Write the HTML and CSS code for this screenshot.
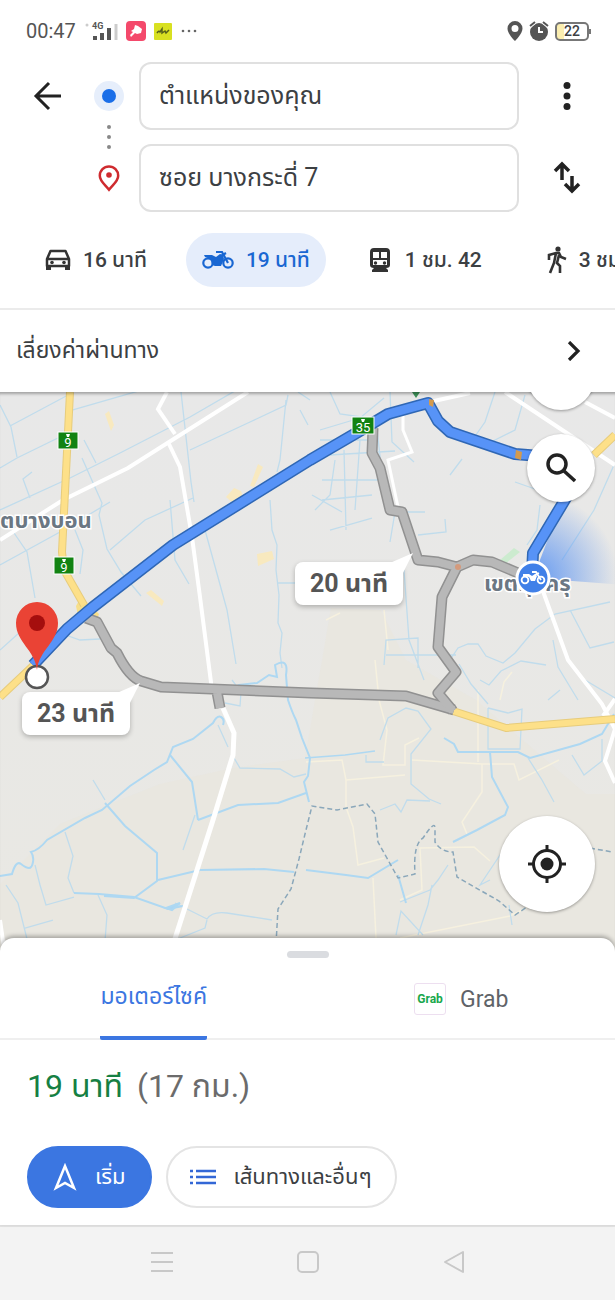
FILE: index.html
```html
<!DOCTYPE html>
<html lang="th">
  <head>
    <meta charset="UTF-8" />
    <meta name="viewport" content="width=device-width, initial-scale=1" />
    <title>Directions</title>
    <link rel="stylesheet" href="styles.css">
  </head>
  <body>
    <div class="app">
      <div class="status-bar">
        <div class="status-group">
          <span class="clock">00:47</span>
          <svg class="signal" width="34" height="22" viewBox="0 0 34 22">
            <circle cx="3" cy="5" r="1.5" fill="#ccc" />
            <path d="M11 16v4M18 13v7M25 8v12" stroke="#555" stroke-width="4" />
            <path d="M32 4v16" stroke="#ccc" stroke-width="3" />
            <text x="8" y="9" class="signal-text">4G</text>
          </svg>
          <svg width="20" height="20" viewBox="0 0 20 20">
            <rect width="20" height="20" rx="4" fill="#f4496b" />
            <path d="M9 4l3 1 4 3-1 4-4 1-2-1-4 4-1-2 3-3-2-1 3-2z" fill="#fff" />
          </svg>
          <svg width="18" height="17" viewBox="0 0 18 17">
            <rect width="18" height="17" rx="1" fill="#d8e021" />
            <path d="M3 10q2-3 3-1l2-3v4l3-2 1 2 3-3" fill="none" stroke="#55601a" stroke-width="1.5" />
          </svg>
          <svg width="18" height="4" viewBox="0 0 18 4" fill="#666">
            <circle cx="3" cy="2" r="1.3" />
            <circle cx="9" cy="2" r="1.3" />
            <circle cx="15" cy="2" r="1.3" />
          </svg>
        </div>
        <div class="status-group right">
          <svg width="16" height="20" viewBox="0 0 16 20">
            <path d="M8 0a7.5 7.5 0 0 0-7.5 7.5C.5 13 8 20 8 20s7.5-7 7.5-12.5A7.5 7.5 0 0 0 8 0zm0 4a3.5 3.5 0 1 1 0 7 3.5 3.5 0 0 1 0-7z" fill="#555" />
          </svg>
          <svg width="20" height="20" viewBox="0 0 20 20">
            <circle cx="10" cy="11" r="9" fill="#555" />
            <path d="M1 5l5-4M19 5l-5-4" stroke="#fff" stroke-width="4" />
            <path d="M1 5l5-4M19 5l-5-4" stroke="#555" stroke-width="2" />
            <path d="M10 6v5h4" fill="none" stroke="#fff" stroke-width="2" />
          </svg>
          <span class="battery">22</span>
        </div>
      </div>

      <form class="search">
        <button type="button" class="icon-button" aria-label="Back">
          <svg width="30" height="30" viewBox="0 0 30 30" fill="none" stroke="#222" stroke-width="3">
            <path d="M29 15H4M17 2L4 15l13 13" />
          </svg>
        </button>
        <div class="stops">
          <svg width="30" height="134" viewBox="0 0 30 134">
            <circle cx="15" cy="25" r="15" fill="#e6eefb" />
            <circle cx="15" cy="25" r="7" fill="#1a6ee8" />
            <g fill="#888">
              <circle cx="15" cy="56" r="2" />
              <circle cx="15" cy="66" r="2" />
              <circle cx="15" cy="76" r="2" />
            </g>
            <path d="M15 95.5a9.2 9.2 0 0 0-9.2 9.3c0 5.500 5 8.500 9.200 14 4.200-5.500 9.200-8.500 9.200-14a9.200 9.200 0 0 0-9.200-9.300z" fill="none" stroke="#cf2b2f" stroke-width="2.500" />
            <circle cx="15" cy="104" r="2.800" fill="#cf2b2f" />
          </svg>
        </div>
        <div class="fields">
          <input type="text" aria-label="Start" value="ตำแหน่งของคุณ" />
          <input type="text" aria-label="Destination" value="ซอย บางกระดี่ 7" />
        </div>
        <div class="actions">
          <button type="button" class="icon-button" aria-label="More">
            <svg width="8" height="30" viewBox="0 0 8 30" fill="#222">
              <circle cx="4" cy="4.500" r="3.500" />
              <circle cx="4" cy="15" r="3.500" />
              <circle cx="4" cy="25.500" r="3.500" />
            </svg>
          </button>
          <button type="button" class="icon-button" aria-label="Swap">
            <svg width="28" height="34" viewBox="0 0 28 34" fill="none" stroke="#222" stroke-width="3.500">
              <path d="M9 19V2M2 10l7-7 7 7M19 15v16M12 23l7 7 7-7" />
            </svg>
          </button>
        </div>
      </form>

      <nav class="modes">
        <button class="mode">
          <svg width="26" height="22" viewBox="0 0 26 22">
            <path d="M5.500 2h15L24 10v7H2v-7zM3 10h20" fill="none" stroke="#333" stroke-width="2.500" stroke-linejoin="round" />
            <path d="M1 16h5v5H1zM20 16h5v5h-5z" fill="#333" />
            <circle cx="7" cy="13.500" r="1.800" fill="#333" />
            <circle cx="19" cy="13.500" r="1.800" fill="#333" />
          </svg>
          16 นาที
        </button>
        <button class="mode active">
          <svg width="32" height="20" viewBox="0 0 32 20">
            <g fill="none" stroke="#1967d2" stroke-width="2.200">
              <circle cx="6" cy="13" r="4.700" />
              <circle cx="26" cy="13" r="4.700" />
              <path d="M14 2h6l6 11M19 6l5-3" />
            </g>
            <path d="M2 5h8l4 2 4-3 3 1 1 4-3 7h-6l-3-1-1-6-6-2z" fill="#1967d2" />
          </svg>
          19 นาที
        </button>
        <button class="mode">
          <svg width="28" height="26" viewBox="-4 0 28 26">
            <path d="M5 1h12q4 0 4 4v13q0 3-4 3l2 2v2H3v-2l2-2q-4 0-4-3V5q0-4 4-4z" fill="#333" />
            <path d="M4 5h6v6H4zM12 5h6v6h-6zM4 13h14v5H4z" fill="#fff" />
            <circle cx="6.500" cy="16" r="1.700" fill="#333" />
            <circle cx="15.500" cy="16" r="1.700" fill="#333" />
          </svg>
          1 ชม. 42
        </button>
        <button class="mode">
          <svg width="20" height="28" viewBox="0 0 20 28">
            <circle cx="11" cy="3" r="2.600" fill="#333" />
            <path d="M2 14V9l7-2h3l2 4 5 2M9 7L7 17l-4 10M12 9l-2 8 3 3v7" fill="none" stroke="#333" stroke-width="2.600" />
          </svg>
          3 ชม.
        </button>
      </nav>

      <button class="avoid">
        เลี่ยงค่าผ่านทาง
        <svg width="14" height="20" viewBox="0 0 14 20" fill="none" stroke="#222" stroke-width="3.200">
          <path d="M2 1l9 9-9 9" />
        </svg>
      </button>

      <main class="map">
        <svg class="map-canvas" viewBox="0 392 615 558" preserveAspectRatio="xMidYMin slice">
          <defs>
            <linearGradient id="land" x1="0" y1="0" x2="0" y2="1">
              <stop offset="0" stop-color="#e8e8e8" />
              <stop offset="1" stop-color="#e9e8e3" />
            </linearGradient>
            <radialGradient id="beam" gradientUnits="userSpaceOnUse" cx="533" cy="578" r="85">
              <stop offset="0" stop-color="#4285f4" stop-opacity="0.8" />
              <stop offset="1" stop-color="#4285f4" stop-opacity="0" />
            </radialGradient>
          </defs>
          <rect y="392" width="615" height="558" fill="url(#land)" />
          <path d="M233 768l72-10 26-150 50 2 25 50 70 40 70 60 40 34 29 0v156H0v-66l60-60 100-40z" fill="#e8e6df" opacity="0.8" />

          <!-- parks and built up blocks -->
          <g fill="#f8e9bf">
            <path d="M105 414l4-3 5 14-3 6zM226 497l8-9 7 3 3 9-10 4zM250 486l8-22 5 3-9 20zM257 554l15-3 2 8-16 7zM146 593l5-3 13 11-2 5z" />
            <path d="M76 606l5-9 18 17-4 10-17-8z" fill="#f7df8b" />
          </g>
          <path d="M500 560l14-12 6 4-15 12z" fill="#ccebcf" />

          <!-- small lanes -->
          <g fill="none" stroke="#f6f1df" stroke-width="1.500">
            <path d="M375 660l4 40 8 30-4 35 22 0 0-20 14-7M306 762l36-2 4 20v27M346 780l59-5M346 807l7 20 5 38 26-7M412 760l70 4 0 28-20 30 5 12M482 764l32 0 5 16 40-20M478 690v72M373 878l3 60M400 900l22-10-2-42 54-1 16 14M400 938l60-12 50-10 40-20M384 610l4 40M326 620l14-7" />
            <path d="M500 700l4-18 8-10" />
          </g>

          <!-- canals and rivers -->
          <g fill="none" stroke="#c0dcec" stroke-width="1.300">
            <path d="M0 405l11 22 6 30M10 426l60-32M0 468l17-10 45-22M0 510l70-32 50-25 70-36 100-58M0 565l60-33 50-30M72 410l70-20M84 440l12 23M30 498L23 479l9-7M82 458l20 45-3 12 8 34 14 23 20 24M12 530l15 22 8 46M75 530l8 20-3 24M110 550l35-30 48-22M170 500l5 60 14 24M181 392l10 90 3 20M190 450l60-28 36-17 2-10M286 400l-6 60-3 12M205 530l22 80 9 54" />
            <path d="M270 500l2 30 5 15-1 25 3 25-1 28 4 10-2 20 2 15M278 583h20M310 400l-12-8M300 410l8 15M0 650l20-18M60 633l20 7 20-1" />
            <path d="M320 430l40-12 24-20M330 392l10 22 35 5 50-20M390 392l2 50 22 20M330 455l65-4M335 460l-5 35-15 15M344 450l2 80M360 440l-5 70M322 480h64M322 500l50-5M312 495l30 17M330 530l42-12M395 512l-5 30M395 512h30M418 535l28-3-1-13M320 440h50M376 420l5 45M450 475l12-16M495 392l-10 30-14 20M525 395l-10 35-24 12M540 505l-3 25-10 15" />
            <path d="M614 465l-20 45-32 50M515 482l20 7M404 570l5 70 15 40M450 660l8-12 10-4 10 0 8 12 17 7 12-10 20-24 20-15 55-12M570 610l20 38 24-6M384 665l2-25 32-2v30M386 655h70M488 708l20 5 14-4-2 40-32 0V708" />
            <path d="M459 664l12 20 17 20M480 680l9 5 12-14 20-10 25 4M553 640l5 27 20 33M560 690l-12 10M585 680l30 18" />
            <path d="M380 740l8-22 18-10 12 3 13 18-20 25 0 30 18 15 12 5M366 755l0 7h18M380 810l15-6 6 8 6-12 23 1M572 755l12 20 18-14 0-22M528 758l14 22 12 22M490 880l-10 5 20-30M512 925l-3-20M448 865l-10 15-8 10-30 12M418 935l10-30 4-20M396 935l5-24 22 24" />
            <path d="M93 780l12 20M65 832l8 24-5 22 6 15M35 865l5 20 6 20 28-8M6 885l12 18 10 40M25 928l28-8M98 895l9 20-2 26M195 815l-12 35M207 920l-2 8-30 12M232 680l9 12-1 14-15-3M218 725l10 22M234 758l6 10 40 1 14 8 12-3M175 903l32 16q5-8 20-6l45 7" />
          </g>
          <g fill="none" stroke="#aed8f2" stroke-width="2">
            <path d="M0 876l12-2q4-14 9-10t8 4 4-6-2-10q8-2 16-12l38-22 17-8 28-24 24-16 13-8 6-15 20-8 20-16q4-8 8-6t2 8" />
            <path d="M105 803l20 23 32 27v28l-23 17-30-2M170 755l22 27 6 38M158 880l42-10 64-1 30 3M74 893l25 1 35 3 34 12 15-3" />
            <path d="M198 820l40-15 40-2 28-10M225 692l14-7 18-2 12-8 8 2-2-12q14-8 11 10l2 25q4 12 8 20l6 18 8 20-2 18-4 6 5 20" />
            <path d="M306 870l40 5 22 3 30-18M398 875l8 28" />
            <path d="M444 738l10 6 4 8 32 0 28 0 12 6 50-14 22-10 12-20M490 752l2 25 16 30-3 8-28 15-24 12" />
            <path d="M305 758l40-3 30-4" stroke-width="1.500" />
            <path d="M180 903l-14 5 6 2z" fill="#a9d6f5" />
          </g>

          <!-- district border -->
          <path d="M276 944l2-35 13-20 8-30 6-25 7-28 25 4 30-6 8 10 3 28 20 36 17-4q-2-30 8-36 12-18 12-10l0 14q6 10 18 10l4 25 42 24 16 14 12-8M590 848l22 4" fill="none" stroke="#8aa7ba" stroke-width="1.500" stroke-dasharray="5 3" />

          <!-- minor roads -->
          <g fill="none" stroke="#fff" stroke-width="4">
            <path d="M0 540l63-40 65-32 120-76" />
            <path d="M167 392l-9 17 17 25M168 442l12 25 12 70 8 60 12 93" />
            <path d="M223 708l11 25-1 22-20 65-40 125" stroke-width="5" />
            <path d="M403 410l0 20 9 22-24 8 10 47" stroke-width="3" />
            <path d="M505 392l110 73M425 403l45-10M585 402l30 16" />
            <path d="M540 583l28 77 34 44 13 25-10 32 10 22M603 716l12-17" />
          </g>
          <path d="M0 920l4 28" stroke="#fff" stroke-width="4" />

          <!-- highways -->
          <g fill="none" stroke-linejoin="round">
            <g stroke="#e7cc7c" stroke-width="8">
              <path d="M70 392l-8 160 2 18 20 35M0 697l35-33M453 711l53 17 109-9M594 455l21-20" />
            </g>
            <g stroke="#fde089" stroke-width="6">
              <path d="M70 392l-8 160 2 18 20 35M0 697l35-33M453 711l53 17 109-9M594 455l21-20" />
            </g>
          </g>

          <!-- other routes -->
          <g fill="none" stroke-linejoin="round">
            <g stroke="#919191" stroke-width="11">
              <path d="M217 692l3 16M86 618l11 4 14 26 6 5q12 24 24 28l20 6 150 6 95 3 48 14" />
              <path d="M373 428l-1 25 8 15 10 42 12 2 16 48 20 2 19 5 16-7 19 2 26 11M457 567l-15 30-4 50 18 25-18 21 15 18" />
            </g>
            <g stroke="#b8b8b8" stroke-width="8">
              <path d="M217 692l3 16M86 618l11 4 14 26 6 5q12 24 24 28l20 6 150 6 95 3 48 14" />
              <path d="M373 428l-1 25 8 15 10 42 12 2 16 48 20 2 19 5 16-7 19 2 26 11M457 567l-15 30-4 50 18 25-18 21 15 18" />
            </g>
          </g>
          <circle cx="458" cy="567" r="3" fill="#d49a7c" />
          <path d="M412 392h8l-4 6z" fill="#3c9158" />

          <path d="M533 578L565 495l60 15v75z" fill="url(#beam)" />

          <text x="484" y="591" class="place">เขตทุ่งครุ</text>
          <text x="0" y="528" class="place">ตบางบอน</text>

          <!-- selected route -->
          <g fill="none" stroke-linejoin="round">
            <path d="M33 665l34-36 26-22 80-62 137-85 48-28 30-18 40-11 10 18 12 11 65 22 50 4 20 8-22 37-30 50-1 20" stroke="#2f67b5" stroke-width="12" />
            <path d="M33 665l34-36 26-22 80-62 137-85 48-28 30-18 40-11 10 18 12 11 65 22 50 4 20 8-22 37-30 50-1 20" stroke="#5793f7" stroke-width="9" />
          </g>
          <path d="M429 399l5 1-1 7-4-2zM516 450l6 2-1 8-6-2z" fill="#d39a4e" />

          <!-- road shields -->
          <g class="shield">
            <rect x="58" y="432" width="20" height="17" />
            <rect x="54" y="557" width="20" height="17" />
            <rect x="352" y="417" width="22" height="17" />
            <path d="M66 434h4l-1 3h-2zM62 559h4l-1 3h-2zM361 419h4l-1 3h-2z" class="crown" />
            <text x="68" y="447">9</text>
            <text x="64" y="572">9</text>
            <text x="363" y="432">35</text>
          </g>

          <!-- destination -->
          <circle cx="37" cy="677" r="11" fill="#fff" stroke="#555" stroke-width="2.500" />
          <path d="M37 670c-2-20-21-28-21-47a21 21 0 0 1 42 0c0 19-19 27-21 47z" fill="#ea4335" />
          <circle cx="37" cy="623" r="8" fill="#a50e0e" />

          <!-- current position -->
          <circle cx="533" cy="578" r="16" fill="#4080e8" stroke="#fff" stroke-width="3" />
          <g fill="none" stroke="#fff" stroke-width="1.800">
            <circle cx="525" cy="580" r="3.400" />
            <circle cx="541" cy="580" r="3.400" />
            <path d="M532 572h4l5 8M535 575l4-2" />
            <path d="M523 574h6l3 2 3-2 2 2-2 5h-4l-2-4-6-1z" fill="#fff" stroke="none" />
          </g>
        </svg>

        <span class="callout callout-north">20 นาที</span>
        <span class="callout callout-south">23 นาที</span>

        <button class="fab layers" aria-label="Layers"></button>
        <button class="fab find" aria-label="Search">
          <svg width="30" height="30" viewBox="0 0 30 30" fill="none" stroke="#222" stroke-width="3.500">
            <circle cx="11" cy="11" r="9" />
            <path d="M18 18l11 10" />
          </svg>
        </button>
        <button class="fab locate" aria-label="My location">
          <svg width="38" height="38" viewBox="0 0 38 38" fill="none" stroke="#222" stroke-width="3">
            <circle cx="19" cy="19" r="13.500" />
            <path d="M19 0v6M19 32v6M0 19h6M32 19h6" />
            <circle cx="19" cy="19" r="6.500" fill="#222" stroke="none" />
          </svg>
        </button>
      </main>

      <section class="sheet">
        <div class="handle"></div>
        <div class="tabs">
          <button class="tab active"><span>มอเตอร์ไซค์</span></button>
          <button class="tab">
            <span class="grab-logo">Grab</span>
            Grab
          </button>
        </div>
        <p class="summary"><span class="duration">19 นาที</span> (17 กม.)</p>
        <div class="buttons">
          <button class="pill start">
            <svg width="24" height="28" viewBox="0 0 24 28" fill="none" stroke="#fff" stroke-width="2.500">
              <path d="M12 3L3 25l9-5 9 5z" />
            </svg>
            เริ่ม
          </button>
          <button class="pill">
            <svg width="26" height="16" viewBox="0 0 26 16" stroke="#3367d6" stroke-width="2.500">
              <path d="M0 2h3M6 2h20M0 8h3M6 8h20M0 14h3M6 14h20" />
            </svg>
            เส้นทางและอื่นๆ
          </button>
        </div>
      </section>

      <footer class="nav-bar">
        <button aria-label="Recent apps">
          <svg width="22" height="22" viewBox="0 0 22 22" stroke="#c8c8c8" stroke-width="2">
            <path d="M0 2h22M0 11h22M0 20h22" />
          </svg>
        </button>
        <button aria-label="Home">
          <svg width="22" height="22" viewBox="0 0 22 22" fill="none" stroke="#c8c8c8" stroke-width="2">
            <rect x="1" y="1" width="20" height="20" rx="4" />
          </svg>
        </button>
        <button aria-label="Back">
          <svg width="22" height="24" viewBox="0 0 22 24" fill="none" stroke="#c8c8c8" stroke-width="2" stroke-linejoin="round">
            <path d="M20 2v20L2 12z" />
          </svg>
        </button>
      </footer>
    </div>
  </body>
</html>
```
FILE: styles.css
```css
* {
  box-sizing: border-box;
}

body {
  margin: 0;
  font-family: Roboto, "Noto Sans Thai", "Noto Sans", sans-serif;
  color: #3c4043;
  background: #fff;
}

button,
input {
  font-family: inherit;
  color: inherit;
}

button {
  padding: 0;
  border: none;
  background: none;
}

svg {
  flex-shrink: 0;
}

.app {
  display: flex;
  flex-direction: column;
  min-height: 100vh;
  overflow: hidden;
}

/* status bar */
.status-bar {
  display: flex;
  justify-content: space-between;
  height: 62px;
  padding: 0 26px;
}

.status-group {
  display: flex;
  align-items: center;
  gap: 8px;
}

.status-group.right {
  gap: 6px;
}

.clock {
  font-size: 20px;
  color: #555;
}

.signal-text {
  font-size: 9px;
  font-weight: bold;
  fill: #555;
}

.battery {
  position: relative;
  width: 34px;
  border: 2px solid #777;
  border-radius: 5px;
  background: linear-gradient(to right, #fbeeb0 22%, #fff 22%);
  font-size: 14px;
  font-weight: 500;
  line-height: 15px;
  text-align: center;
}

.battery::after {
  content: "";
  position: absolute;
  top: 5px;
  right: -4px;
  width: 2px;
  height: 5px;
  background: #777;
}

/* start and destination */
.search {
  display: flex;
  height: 150px;
}

.icon-button {
  display: flex;
  align-items: center;
  justify-content: center;
  height: 68px;
}

.search > .icon-button {
  width: 94px;
}

.stops {
  display: flex;
  width: 45px;
  padding-top: 9px;
}

.fields,
.actions {
  display: flex;
  flex-direction: column;
  gap: 14px;
}

.fields {
  flex: 1;
}

.actions {
  width: 96px;
}

.fields input {
  width: 100%;
  height: 68px;
  padding: 0 18px;
  border: 2px solid #e0e0e0;
  border-radius: 12px;
  background: #fff;
  font-size: 25px;
}

/* travel modes */
.modes {
  display: flex;
  gap: 13px;
  height: 98px;
  padding: 21px 19px;
  border-bottom: 2px solid #ebebeb;
}

.mode {
  display: flex;
  flex-shrink: 0;
  align-items: center;
  gap: 12px;
  height: 54px;
  padding: 0 26px;
  border-radius: 27px;
  font-size: 21px;
  font-weight: 500;
  white-space: nowrap;
}

.mode.active {
  padding: 0 16px;
  background: #e5edfb;
  color: #1967d2;
}

.avoid {
  display: flex;
  align-items: center;
  justify-content: space-between;
  height: 82px;
  padding: 0 34px 0 16px;
  font-size: 23px;
}

/* map */
.map {
  position: relative;
  flex: 1;
  min-height: 400px;
  overflow: hidden;
  box-shadow: inset 0 4px 3px -2px rgba(0, 0, 0, 0.3);
}

.map-canvas {
  position: absolute;
  z-index: -1;
  width: 100%;
  height: 100%;
}

.place {
  font-size: 22px;
  font-weight: bold;
  fill: #6b7783;
  stroke: #fff;
  stroke-width: 3px;
  paint-order: stroke;
}

.shield rect {
  fill: #128312;
  stroke: #fff;
}

.shield text {
  font-size: 13px;
  fill: #fff;
  text-anchor: middle;
}

.crown {
  fill: #fff;
}

.callout {
  position: absolute;
  width: 108px;
  border-radius: 8px;
  background: #fff;
  box-shadow: 0 2px 5px rgba(0, 0, 0, 0.25);
  font-size: 25px;
  font-weight: bold;
  line-height: 43px;
  text-align: center;
  color: #555;
}

.callout::after {
  content: "";
  position: absolute;
  right: -10px;
  top: -9px;
  width: 22px;
  height: 24px;
  background: #fff;
  clip-path: polygon(100% 0, 0 40%, 45% 100%);
}

.callout-north {
  left: 295px;
  top: 170px;
}

.callout-south {
  left: 22px;
  top: 300px;
}

.fab {
  position: absolute;
  right: 20px;
  display: flex;
  align-items: center;
  justify-content: center;
  width: 68px;
  height: 68px;
  border-radius: 50%;
  background: #fff;
  box-shadow: 0 1px 3px rgba(0, 0, 0, 0.35);
}

.layers {
  top: -50px;
}

.find {
  top: 42px;
}

.locate {
  bottom: 38px;
  width: 96px;
  height: 96px;
}

/* bottom sheet */
.sheet {
  position: relative;
  margin-top: -12px;
  border-radius: 14px 14px 0 0;
  background: #fff;
  box-shadow: 0 -2px 4px rgba(0, 0, 0, 0.3);
}

.handle {
  width: 42px;
  height: 7px;
  margin: 13px auto 0;
  border-radius: 4px;
  background: #dadce0;
}

.tabs {
  display: flex;
  height: 82px;
  border-bottom: 2px solid #efefef;
}

.tab {
  display: flex;
  flex: 1;
  align-items: center;
  justify-content: center;
  gap: 14px;
  height: 82px;
  font-size: 23px;
  color: #5f6368;
}

.tab.active {
  color: #3b76e1;
}

.tab.active span {
  border-bottom: 4px solid #3b76e1;
  border-radius: 2px;
  line-height: 78px;
}

.grab-logo {
  width: 32px;
  border: 1px solid #eddff0;
  border-radius: 3px;
  font-size: 12px;
  font-weight: bold;
  line-height: 30px;
  color: #19a84c;
}

.summary {
  margin: 0;
  padding: 24px 27px;
  font-size: 32px;
  line-height: 44px;
  color: #6b6b6b;
}

.duration {
  margin-right: 6px;
  color: #168043;
}

.buttons {
  display: flex;
  gap: 14px;
  padding: 14px 27px 17px;
}

.pill {
  display: flex;
  align-items: center;
  gap: 18px;
  height: 62px;
  padding: 0 24px 0 22px;
  border: 2px solid #e4e4e4;
  border-radius: 31px;
  font-size: 22px;
}

.pill.start {
  padding: 0 24px;
  border-color: #3b76e1;
  background: #3b76e1;
  color: #fff;
}

/* system buttons */
.nav-bar {
  display: flex;
  justify-content: center;
  gap: 124px;
  height: 75px;
  border-top: 2px solid #e3e3e3;
  background: #f3f3f3;
}
```
